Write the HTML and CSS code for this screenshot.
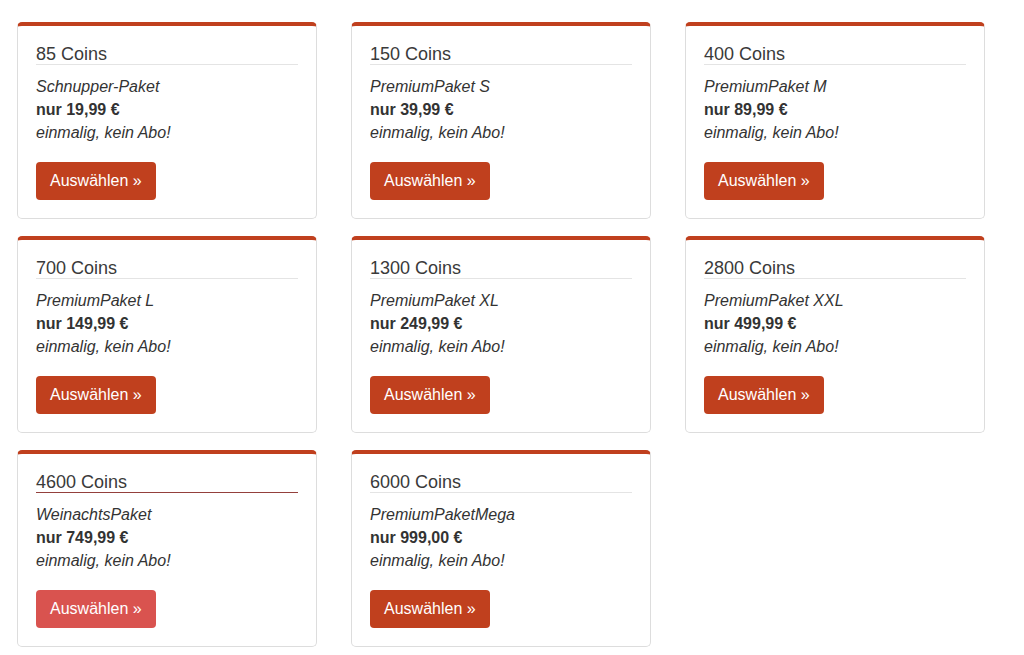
FILE: index.html
```html
<!DOCTYPE html>
<html lang="de">
<head>
<meta charset="utf-8">
<title>Coins</title>
<link rel="stylesheet" href="styles.css">
</head>
<body>
<div class="grid">
  <div class="card">
    <h3 class="title">85 Coins</h3>
    <p class="name">Schnupper-Paket</p>
    <p class="price">nur 19,99 €</p>
    <p class="note">einmalig, kein Abo!</p>
    <a class="btn" href="#">Auswählen »</a>
  </div>
  <div class="card">
    <h3 class="title">150 Coins</h3>
    <p class="name">PremiumPaket S</p>
    <p class="price">nur 39,99 €</p>
    <p class="note">einmalig, kein Abo!</p>
    <a class="btn" href="#">Auswählen »</a>
  </div>
  <div class="card">
    <h3 class="title">400 Coins</h3>
    <p class="name">PremiumPaket M</p>
    <p class="price">nur 89,99 €</p>
    <p class="note">einmalig, kein Abo!</p>
    <a class="btn" href="#">Auswählen »</a>
  </div>
  <div class="card">
    <h3 class="title">700 Coins</h3>
    <p class="name">PremiumPaket L</p>
    <p class="price">nur 149,99 €</p>
    <p class="note">einmalig, kein Abo!</p>
    <a class="btn" href="#">Auswählen »</a>
  </div>
  <div class="card">
    <h3 class="title">1300 Coins</h3>
    <p class="name">PremiumPaket XL</p>
    <p class="price">nur 249,99 €</p>
    <p class="note">einmalig, kein Abo!</p>
    <a class="btn" href="#">Auswählen »</a>
  </div>
  <div class="card">
    <h3 class="title">2800 Coins</h3>
    <p class="name">PremiumPaket XXL</p>
    <p class="price">nur 499,99 €</p>
    <p class="note">einmalig, kein Abo!</p>
    <a class="btn" href="#">Auswählen »</a>
  </div>
  <div class="card">
    <h3 class="title title-active">4600 Coins</h3>
    <p class="name">WeinachtsPaket</p>
    <p class="price">nur 749,99 €</p>
    <p class="note">einmalig, kein Abo!</p>
    <a class="btn btn-hover" href="#">Auswählen »</a>
  </div>
  <div class="card">
    <h3 class="title">6000 Coins</h3>
    <p class="name">PremiumPaketMega</p>
    <p class="price">nur 999,00 €</p>
    <p class="note">einmalig, kein Abo!</p>
    <a class="btn" href="#">Auswählen »</a>
  </div>
</div>
</body>
</html>
```

FILE: styles.css
```css
html, body {
  margin: 0;
  padding: 0;
  background: #fff;
}
body {
  font-family: "Liberation Sans", Arial, sans-serif;
  color: #333;
}
.grid {
  display: grid;
  grid-template-columns: repeat(3, 300px);
  column-gap: 34px;
  row-gap: 17px;
  padding: 22px 0 0 17px;
}
.card {
  box-sizing: border-box;
  height: 197px;
  border: 1px solid #dddddd;
  border-top: 4px solid #c0401e;
  border-radius: 5px;
  padding: 18px 18px 18px 18px;
  display: flex;
  flex-direction: column;
  align-items: flex-start;
}
.title {
  align-self: stretch;
  margin: 0 0 10px 0;
  font-size: 18px;
  font-weight: normal;
  line-height: 20px;
  color: #3a3a3a;
  border-bottom: 1px solid #e4e4e4;
}
.title-active {
  border-bottom-color: #94403c;
}
.name, .price, .note {
  margin: 0;
  font-size: 16px;
  line-height: 23px;
}
.name, .note {
  font-style: italic;
}
.price {
  font-weight: bold;
}
.btn {
  margin-top: 18px;
  display: inline-block;
  background: #c0401e;
  color: #fff;
  text-decoration: none;
  font-size: 16px;
  line-height: 22px;
  padding: 8px 14px;
  border-radius: 4px;
}
.btn-hover {
  background: #d9534f;
}
```
